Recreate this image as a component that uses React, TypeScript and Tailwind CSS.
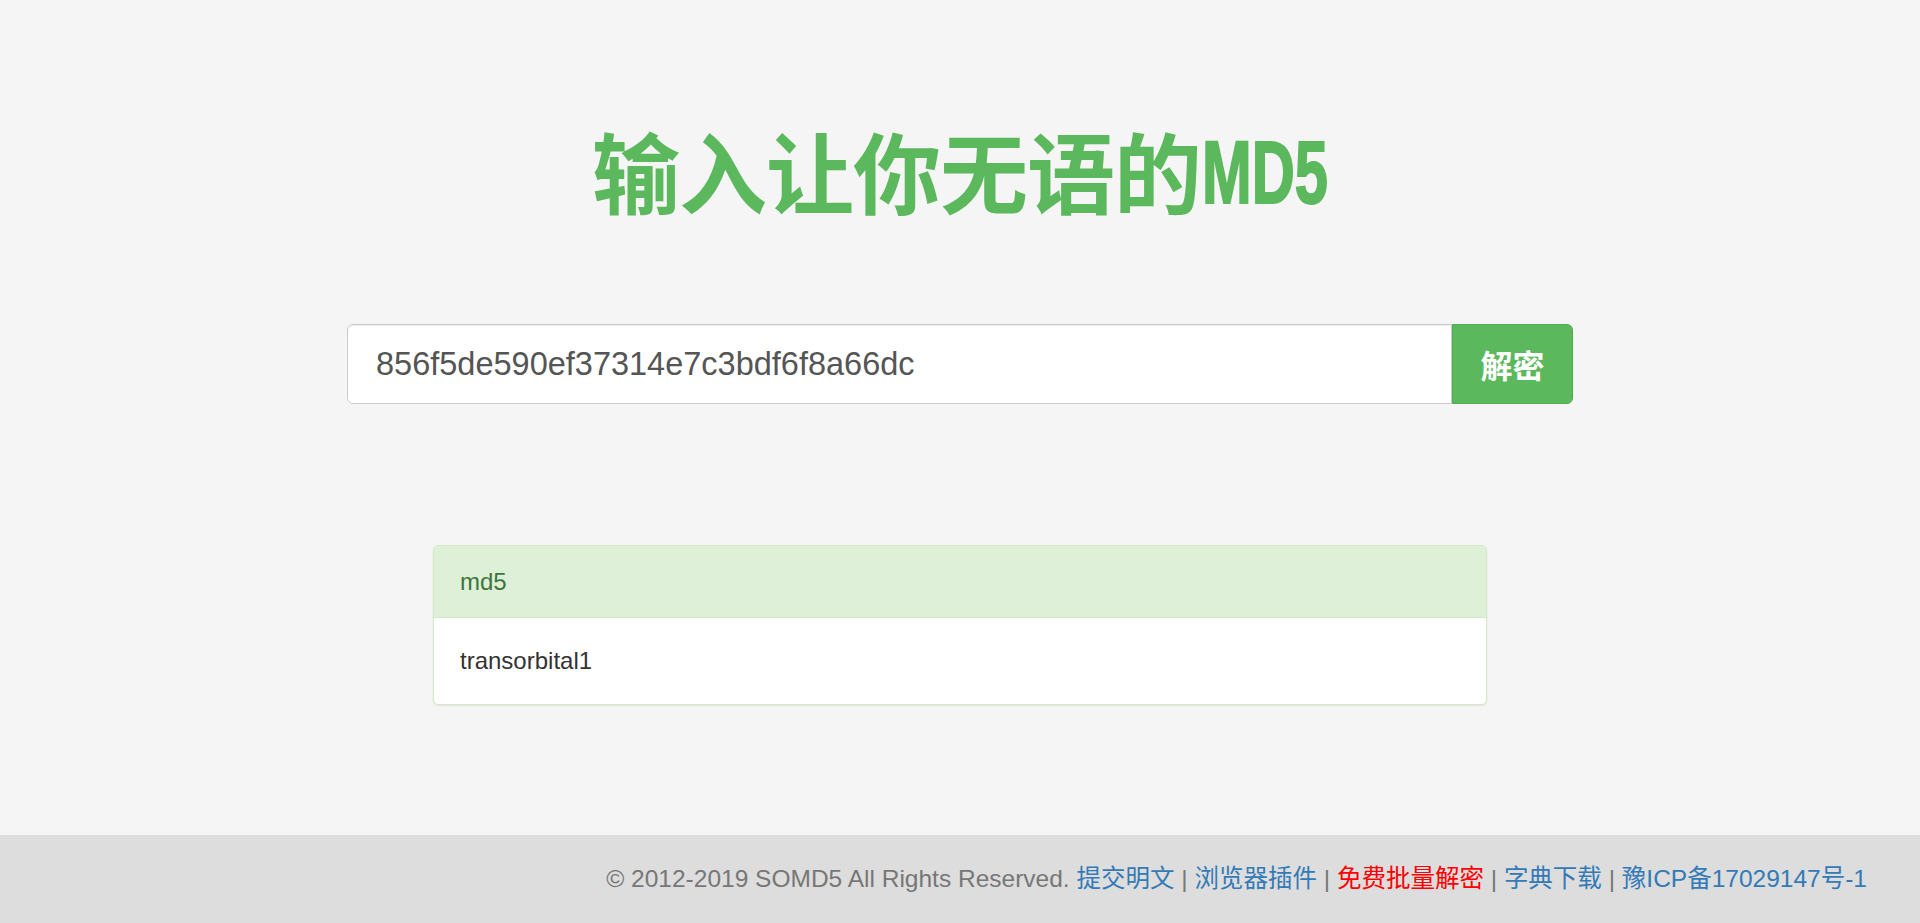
import React from "react";

export default function App() {
  const sans = "font-['Liberation_Sans','Noto_Sans_CJK_SC',sans-serif]";
  return (
    <div className={`h-screen flex flex-col bg-[#f5f5f5] ${sans}`}>
      <main className="flex-1 flex flex-col items-center">
        <h1 className="mt-[121px] h-[88px] leading-none whitespace-nowrap text-[#5cb85c] font-semibold text-[88px] tracking-[-1px] font-['Noto_Sans_CJK_SC',sans-serif]">
          输入让你无语的
          <span className="inline-block w-[126px] ml-[1px] tracking-normal align-[4px]">
            <span className="inline-block origin-left [transform:scaleX(0.67)] leading-none text-[89px] font-bold [-webkit-text-stroke:2px_#5cb85c] font-['Liberation_Sans',sans-serif]">
              MD5
            </span>
          </span>
        </h1>

        <div className="mt-[115px] flex w-[1226px] h-[80px]">
          <input
            readOnly
            value="856f5de590ef37314e7c3bdf6f8a66dc"
            className="flex-1 h-full bg-white border border-[#ccc] rounded-l-[6px] pl-[28px] pr-[16px] text-[32.5px] text-[#555] outline-none shadow-[inset_0_1px_1px_rgba(0,0,0,0.075)] font-['Liberation_Sans',sans-serif]"
          />
          <button className="w-[121px] h-full bg-[#5cb85c] border border-[#4cae4c] rounded-r-[6px] text-white text-[32px] font-bold font-['Noto_Sans_CJK_SC',sans-serif] flex items-center justify-center">
            解密
          </button>
        </div>

        <div className="mt-[141px] w-[1054px] bg-white border border-[#d6e9c6] rounded-[5px] shadow-[0_1px_2px_rgba(0,0,0,0.08)] overflow-hidden">
          <div className="h-[72px] bg-[#dff0d8] border-b border-[#d6e9c6] px-[26px] flex items-center text-[24px] text-[#3c763d]">
            md5
          </div>
          <div className="h-[86px] px-[26px] flex items-center text-[24px] text-[#333]">
            transorbital1
          </div>
        </div>
      </main>

      <footer className="h-[88px] shrink-0 bg-[#dddddd] flex items-center justify-end pr-[53px] text-[24.5px] text-[#777] whitespace-nowrap">
        <span>© 2012-2019 SOMD5 All Rights Reserved.&nbsp;</span>
        <a className="text-[#337ab7]">提交明文</a>
        <span>&nbsp;|&nbsp;</span>
        <a className="text-[#337ab7]">浏览器插件</a>
        <span>&nbsp;|&nbsp;</span>
        <a className="text-[#ff0000]">免费批量解密</a>
        <span>&nbsp;|&nbsp;</span>
        <a className="text-[#337ab7]">字典下载</a>
        <span>&nbsp;|&nbsp;</span>
        <a className="text-[#337ab7]">豫ICP备17029147号-1</a>
      </footer>
    </div>
  );
}
